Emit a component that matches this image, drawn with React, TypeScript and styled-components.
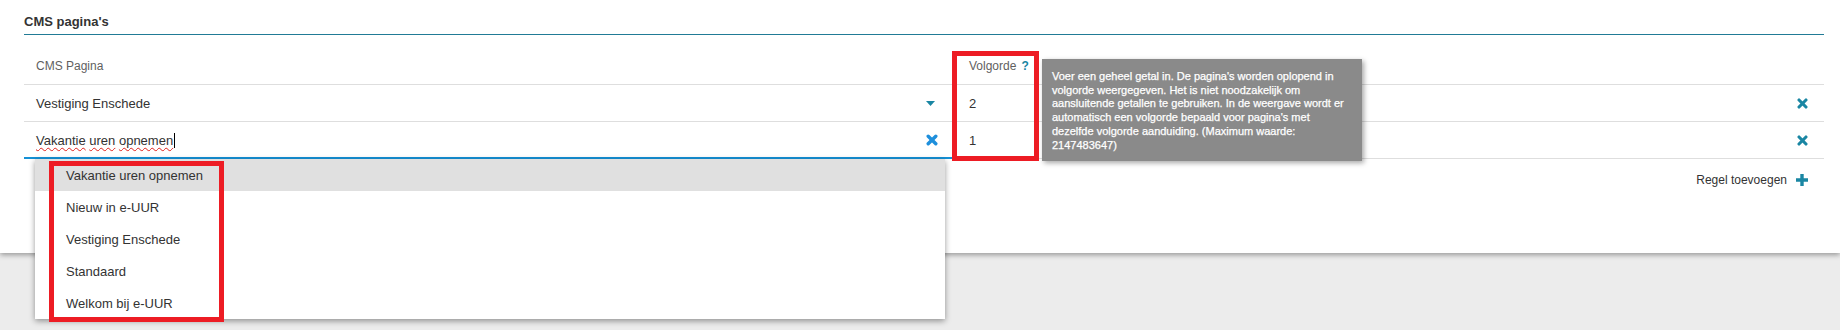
import React from "react";
import styled, { createGlobalStyle } from "styled-components";

const GlobalStyle = createGlobalStyle`
  html, body { margin: 0; padding: 0; }
  body {
    background: #ececec;
    font-family: "Liberation Sans", Arial, sans-serif;
    color: #333;
  }
  * { box-sizing: border-box; }
`;

const TEAL = "#1a86a3";
const BLUE = "#1e8fdc";
const FOCUS = "#1591d6";
const RED = "#ed1c24";

const Page = styled.div`
  min-height: 330px;
  background: #ececec;
  position: relative;
`;

const Card = styled.section`
  position: relative;
  background: #fff;
  height: 253px;
  padding: 0 16px 0 24px;
  box-shadow: 0 2px 5px rgba(0, 0, 0, 0.35);
`;

const Title = styled.h2`
  margin: 0;
  height: 35px;
  padding-top: 14px;
  font-size: 13px;
  line-height: 15px;
  font-weight: bold;
  color: #333;
  border-bottom: 1px solid #217b96;
`;

const Table = styled.div`
  position: relative;
  margin-top: 13px;
`;

const Row = styled.div<{ $header?: boolean }>`
  display: grid;
  grid-template-columns: 928px 88px 1fr 44px;
  height: 37px;
  border-bottom: 1px solid #dedede;
  font-size: ${(p) => (p.$header ? "12px" : "13px")};
  color: ${(p) => (p.$header ? "#5f5f5f" : "#333")};
`;

const Cell = styled.div<{ $pl?: number; $end?: boolean }>`
  display: flex;
  align-items: center;
  justify-content: ${(p) => (p.$end ? "flex-end" : "flex-start")};
  padding-left: ${(p) => p.$pl ?? 0}px;
  padding-right: ${(p) => (p.$end ? 16 : 0)}px;
`;

const SelectCell = styled.div<{ $focused?: boolean; $pr: number }>`
  position: relative;
  display: flex;
  align-items: center;
  justify-content: space-between;
  padding: 0 ${(p) => p.$pr}px 0 12px;
  &::after {
    content: "";
    display: ${(p) => (p.$focused ? "block" : "none")};
    position: absolute;
    left: 0;
    right: 0;
    bottom: -1px;
    height: 2px;
    background: ${FOCUS};
  }
`;

const IconSlot = styled.span`
  display: inline-flex;
  width: 12px;
  justify-content: center;
  align-items: center;
`;

const Word = styled.span`
  text-decoration: underline wavy #e0201c;
  text-decoration-thickness: 1px;
  text-underline-offset: 2px;
  text-decoration-skip-ink: none;
`;

const Caret = styled.span`
  display: inline-block;
  width: 1px;
  height: 15px;
  background: #000;
  vertical-align: -3px;
  margin-left: 1px;
`;

const Help = styled.span`
  color: ${TEAL};
  font-weight: bold;
  margin-left: 5px;
`;

const Tooltip = styled.div`
  position: absolute;
  left: 1018px;
  top: 11px;
  width: 320px;
  padding: 11px 10px 9px 10px;
  background: #8a8a8a;
  color: #fff;
  font-size: 11px;
  line-height: 13.7px;
  -webkit-text-stroke: 0.25px #fff;
  box-shadow: 2px 2px 5px rgba(0, 0, 0, 0.35);
  z-index: 4;
`;

const Mark = styled.div<{ $l: number; $t: number; $w: number; $h: number }>`
  position: absolute;
  left: ${(p) => p.$l}px;
  top: ${(p) => p.$t}px;
  width: ${(p) => p.$w}px;
  height: ${(p) => p.$h}px;
  border: 5px solid ${RED};
  z-index: 6;
  pointer-events: none;
`;

const Dropdown = styled.ul`
  position: absolute;
  top: calc(100% + 1px);
  left: 11px;
  width: 910px;
  margin: 0;
  padding: 0;
  list-style: none;
  background: #fff;
  box-shadow: 0 2px 6px rgba(0, 0, 0, 0.4);
  z-index: 5;
`;

const DropItem = styled.li<{ $active?: boolean }>`
  height: 32px;
  display: flex;
  align-items: center;
  padding-left: 31px;
  font-size: 13px;
  color: #333;
  background: ${(p) => (p.$active ? "#e0e0e0" : "#fff")};
`;

const AddRow = styled.div`
  display: flex;
  justify-content: flex-end;
  align-items: center;
  gap: 9px;
  height: 42px;
  padding-right: 16px;
  font-size: 12px;
  color: #333;
`;

const CaretDown = () => (
  <svg width="9" height="5" viewBox="0 0 9 5">
    <path d="M0 0 H9 L4.5 5 Z" fill={TEAL} />
  </svg>
);

const Times = ({ color, size = 12 }: { color: string; size?: number }) => (
  <svg width={size} height={size} viewBox="0 0 12 12">
    <g stroke={color} strokeWidth="3.4" strokeLinecap="round">
      <line x1="2.2" y1="2.2" x2="9.8" y2="9.8" />
      <line x1="9.8" y1="2.2" x2="2.2" y2="9.8" />
    </g>
  </svg>
);

const Plus = () => (
  <svg width="12" height="12" viewBox="0 0 12 12">
    <path d="M4.3 0 H7.7 V4.3 H12 V7.7 H7.7 V12 H4.3 V7.7 H0 V4.3 H4.3 Z" fill={TEAL} />
  </svg>
);

const options = [
  "Vakantie uren opnemen",
  "Nieuw in e-UUR",
  "Vestiging Enschede",
  "Standaard",
  "Welkom bij e-UUR",
];

export default function App() {
  return (
    <Page>
      <GlobalStyle />
      <Card>
        <Title>CMS pagina's</Title>
        <Table>
          <Row $header>
            <Cell $pl={12}>CMS Pagina</Cell>
            <Cell $pl={17}>
              Volgorde <Help>?</Help>
            </Cell>
            <Cell />
            <Cell />
          </Row>
          <Row>
            <SelectCell $pr={16}>
              <span>Vestiging Enschede</span>
              <IconSlot>
                <CaretDown />
              </IconSlot>
            </SelectCell>
            <Cell $pl={17}>2</Cell>
            <Cell />
            <Cell $end>
              <Times color={TEAL} size={11} />
            </Cell>
          </Row>
          <Row>
            <SelectCell $focused $pr={14}>
              <span>
                <Word>Vakantie</Word> <Word>uren</Word> <Word>opnemen</Word>
                <Caret />
              </span>
              <IconSlot>
                <Times color={BLUE} />
              </IconSlot>
              <Dropdown>
                {options.map((o, i) => (
                  <DropItem key={o} $active={i === 0}>
                    {o}
                  </DropItem>
                ))}
                <Mark $l={14} $t={2} $w={175} $h={161} />
              </Dropdown>
            </SelectCell>
            <Cell $pl={17}>1</Cell>
            <Cell />
            <Cell $end>
              <Times color={TEAL} size={11} />
            </Cell>
          </Row>
          <Tooltip>
            Voer een geheel getal in. De pagina's worden oplopend in volgorde weergegeven. Het is niet
            noodzakelijk om aansluitende getallen te gebruiken. In de weergave wordt er automatisch een
            volgorde bepaald voor pagina's met dezelfde volgorde aanduiding. (Maximum waarde: 2147483647)
          </Tooltip>
          <Mark $l={928} $t={3} $w={87} $h={110} />
        </Table>
        <AddRow>
          <span>Regel toevoegen</span>
          <Plus />
        </AddRow>
      </Card>
    </Page>
  );
}
